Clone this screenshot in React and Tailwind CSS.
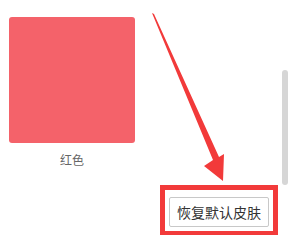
export default function App() {
  return (
    <div
      className="relative w-[291px] h-[235px] overflow-hidden bg-white"
      style={{ fontFamily: '"Noto Sans CJK SC", "Noto Sans", sans-serif' }}
    >
      <div className="pt-[17px] pl-[9px] w-[126px] box-content">
        <div className="w-[126px] h-[126px] rounded-[3px] bg-[#f4626a]" />
        <div className="mt-[8px] text-center text-[12px] leading-[18px] text-[#666]">红色</div>
      </div>

      <div className="mt-[16px] flex justify-end pr-[13px]">
        <div className="w-[118px] h-[51px] border-[5px] border-[#f23a3a] flex items-start pt-[7px] pl-[4px]">
          <button className="w-[100px] h-[30px] border border-[#c8c8c8] rounded-[2px] bg-white text-[14px] text-[#333] leading-none">
            恢复默认皮肤
          </button>
        </div>
      </div>

      {/* scrollbar */}
      <div className="absolute left-[282px] top-[70px] w-[6px] h-[115px] rounded-full bg-[#d6d6d6]" />

      {/* annotation arrow */}
      <svg className="absolute inset-0" width="291" height="235" viewBox="0 0 291 235">
        <polygon
          points="152,13 154,14 219,157 224,154 223,181 204,166 213,160"
          fill="#f23a3a"
        />
      </svg>
    </div>
  );
}
